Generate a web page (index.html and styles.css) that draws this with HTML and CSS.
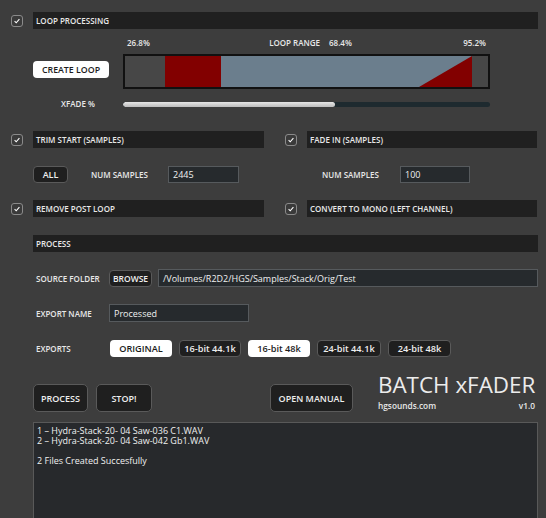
FILE: index.html
```html
<!DOCTYPE html>
<html>
<head>
<meta charset="utf-8">
<link rel="stylesheet" href="styles.css">
</head>
<body>
<div class="app">
  <div class="hrow">
    <span class="cb"><svg width="8" height="8" viewBox="0 0 8 8"><path d="M1.6 4.2 L3.2 5.8 L6.4 2.2" fill="none" stroke="#fff" stroke-width="1.1"/></svg></span>
    <div class="hdr">LOOP PROCESSING</div>
  </div>

  <div class="loop">
    <div></div>
    <div class="marks"><span>26.8%</span><span class="mid">LOOP RANGE<span class="gap"></span>68.4%</span><span>95.2%</span></div>
    <div class="cl-cell"><div class="btn white cl">CREATE LOOP</div></div>
    <div class="wave">
      <svg width="363" height="31" viewBox="0 0 363 31">
        <rect x="0" y="0" width="363" height="31" fill="#474747"/>
        <rect x="40" y="0" width="56" height="31" fill="#820000"/>
        <rect x="96" y="0" width="251" height="31" fill="#6b7e8d"/>
        <polygon points="294,31 347,0 347,31" fill="#820000"/>
      </svg>
    </div>
    <div class="xf-label">XFADE %</div>
    <div class="slider"><div class="fill" style="width:57.8%"></div></div>
  </div>

  <div class="pair">
    <div class="hrow">
      <span class="cb"><svg width="8" height="8" viewBox="0 0 8 8"><path d="M1.6 4.2 L3.2 5.8 L6.4 2.2" fill="none" stroke="#fff" stroke-width="1.1"/></svg></span>
      <div class="hdr">TRIM START (SAMPLES)</div>
    </div>
    <div class="hrow">
      <span class="cb"><svg width="8" height="8" viewBox="0 0 8 8"><path d="M1.6 4.2 L3.2 5.8 L6.4 2.2" fill="none" stroke="#fff" stroke-width="1.1"/></svg></span>
      <div class="hdr">FADE IN (SAMPLES)</div>
    </div>
    <div class="ctrl left">
      <div class="btn dark all">ALL</div>
      <div class="lbl ns-l">NUM SAMPLES</div>
      <div class="field ns-in-l">2445</div>
    </div>
    <div class="ctrl right">
      <div class="lbl ns-r">NUM SAMPLES</div>
      <div class="field ns-in-r">100</div>
    </div>
    <div class="hrow">
      <span class="cb"><svg width="8" height="8" viewBox="0 0 8 8"><path d="M1.6 4.2 L3.2 5.8 L6.4 2.2" fill="none" stroke="#fff" stroke-width="1.1"/></svg></span>
      <div class="hdr">REMOVE POST LOOP</div>
    </div>
    <div class="hrow">
      <span class="cb"><svg width="8" height="8" viewBox="0 0 8 8"><path d="M1.6 4.2 L3.2 5.8 L6.4 2.2" fill="none" stroke="#fff" stroke-width="1.1"/></svg></span>
      <div class="hdr">CONVERT TO MONO (LEFT CHANNEL)</div>
    </div>
  </div>

  <div class="process">
    <div class="hdr">PROCESS</div>
    <div class="prow first">
      <div class="plbl">SOURCE FOLDER</div>
      <div class="btn dark browse">BROWSE</div>
      <div class="field path">/Volumes/R2D2/HGS/Samples/Stack/Orig/Test</div>
    </div>
    <div class="prow">
      <div class="plbl">EXPORT NAME</div>
      <div class="field ename">Processed</div>
    </div>
    <div class="prow">
      <div class="plbl">EXPORTS</div>
      <div class="exports">
        <div class="btn white ex w62">ORIGINAL</div>
        <div class="btn dark ex w62">16-bit 44.1k</div>
        <div class="btn white ex w62">16-bit 48k</div>
        <div class="btn dark ex w64">24-bit 44.1k</div>
        <div class="btn dark ex w63">24-bit 48k</div>
      </div>
    </div>
  </div>

  <div class="bottom">
    <div class="btn dark big b-process">PROCESS</div>
    <div class="btn dark big b-stop">STOP!</div>
    <div class="btn dark big b-manual">OPEN MANUAL</div>
    <div class="brand">
      <div class="title">BATCH xFADER</div>
      <div class="sub"><span>hgsounds.com</span><span>v1.0</span></div>
    </div>
  </div>

  <div class="log">
    <div>1 – Hydra-Stack-20- 04 Saw-036 C1.WAV</div>
    <div>2 – Hydra-Stack-20- 04 Saw-042 Gb1.WAV</div>
    <div>&nbsp;</div>
    <div>2 Files Created Succesfully</div>
  </div>
</div>
</body>
</html>
```

FILE: styles.css
```css
html, body {
  margin: 0;
  padding: 0;
  width: 546px;
  height: 518px;
  overflow: hidden;
}
body {
  background: #3d3d3d;
  font-family: "Open Sans", "DejaVu Sans", sans-serif;
  color: #e8e8e8;
}
.app {
  padding: 12px 8px 0 11px;
}
.hrow {
  display: flex;
  align-items: center;
  gap: 10px;
  height: 17px;
}
.cb {
  flex: none;
  width: 10px;
  height: 10px;
  margin-top: 1px;
  border: 1px solid #8a8a8a;
  border-radius: 3px;
  background: #3a3a3a;
  display: flex;
  align-items: center;
  justify-content: center;
}
.hdr {
  flex: 1;
  height: 17px;
  background: #202020;
  font-size: 8px;
  font-weight: 600;
  display: flex;
  align-items: center;
  padding-left: 3px;
  white-space: nowrap;
}

/* loop */
.loop {
  display: grid;
  grid-template-columns: 90px 367px;
  grid-template-rows: 17px 35px 20px;
  margin: 8px 0 0 22px;
}
.marks {
  display: flex;
  justify-content: space-between;
  padding: 0 4px 0 4px;
  font-size: 8px;
  font-weight: 600;
  line-height: 11px;
  height: 11px;
}
.mid {
  margin-left: 8px;
}
.gap {
  display: inline-block;
  width: 9px;
}
.cl-cell {
  padding-top: 7px;
}
.btn {
  box-sizing: border-box;
  display: flex;
  align-items: center;
  justify-content: center;
  border-radius: 4px;
  font-weight: 600;
  white-space: nowrap;
}
.white {
  background: #ffffff;
  color: #1c1c1c;
}
.dark {
  background: #1f1f1f;
  border: 1px solid #5a5a5a;
  color: #eeeeee;
}
.cl {
  width: 76px;
  height: 17px;
  font-size: 8.8px;
}
.wave {
  box-sizing: border-box;
  border: 2px solid #111111;
  height: 35px;
  display: flex;
}
.wave svg {
  display: block;
}
.xf-label {
  align-self: end;
  font-size: 8px;
  font-weight: 600;
  line-height: 10px;
  padding-left: 28px;
}
.slider {
  align-self: end;
  margin-bottom: 2px;
  height: 5px;
  border-radius: 3px;
  background: #1e2a2f;
  overflow: hidden;
}
.fill {
  height: 100%;
  border-radius: 3px;
  background: linear-gradient(#e6e6e6, #bdbdbd);
}

/* trim / fade */
.pair {
  display: grid;
  grid-template-columns: 253px 252px;
  column-gap: 21px;
  row-gap: 17px;
  margin-top: 22px;
}
.ctrl {
  display: flex;
  align-items: center;
  height: 17px;
  margin-top: 1px;
}
.ctrl.left {
  padding-left: 22px;
}
.ctrl.right {
  padding-left: 37px;
}
.all {
  width: 35px;
  height: 17px;
  font-size: 9px;
}
.lbl {
  font-size: 8px;
  font-weight: 600;
  white-space: nowrap;
}
.ns-l {
  margin-left: 23px;
  width: 77px;
}
.ns-r {
  width: 78px;
}
.field {
  box-sizing: border-box;
  background: #262a2d;
  border: 1px solid #565a5d;
  font-size: 9px;
  font-weight: 500;
  color: #f0f0f0;
  display: flex;
  align-items: center;
  padding-left: 4px;
  white-space: nowrap;
}
.ns-in-l {
  width: 71px;
  height: 17px;
}
.ns-in-r {
  width: 70px;
  height: 17px;
}

/* process */
.process {
  margin: 18px 0 0 22px;
}
.process > .hdr {
  height: 17px;
}
.prow {
  display: flex;
  align-items: center;
  height: 18px;
  margin-top: 17px;
}
.plbl {
  box-sizing: border-box;
  width: 76px;
  padding-left: 3px;
  font-size: 8px;
  font-weight: 600;
  white-space: nowrap;
  flex: none;
}
.browse {
  width: 43px;
  height: 17px;
  font-size: 8.5px;
  flex: none;
}
.path {
  flex: 1;
  height: 18px;
  margin-left: 6px;
}
.ename {
  width: 140px;
  height: 18px;
}
.exports {
  display: flex;
  gap: 7px;
  margin-left: 1px;
}
.ex {
  height: 17px;
  font-size: 9.2px;
}
.w62 { width: 62px; }
.w63 { width: 63px; }
.w64 { width: 64px; }

/* bottom */
.bottom {
  display: flex;
  align-items: flex-end;
  margin: 17px 0 0 22px;
}
.big {
  height: 28px;
  border-radius: 5px;
  font-size: 9px;
}
.b-process { width: 55px; }
.b-stop { width: 56px; margin-left: 8px; }
.b-manual { width: 83px; margin-left: 118px; }
.brand {
  width: 157px;
  margin-left: 25px;
  margin-bottom: 1px;
}
.title {
  font-size: 22.4px;
  line-height: 22px;
  white-space: nowrap;
  color: #ececec;
}
.sub {
  display: flex;
  justify-content: space-between;
  margin-top: 5px;
  font-size: 8.3px;
  font-weight: 600;
  line-height: 10px;
}
.log {
  box-sizing: border-box;
  margin: 10px 0 0 22px;
  height: 120px;
  background: #27292c;
  border: 1px solid #595959;
  padding: 3px 3px;
  font-size: 9px;
  line-height: 10px;
  font-weight: 500;
  color: #f0f0f0;
}
```
